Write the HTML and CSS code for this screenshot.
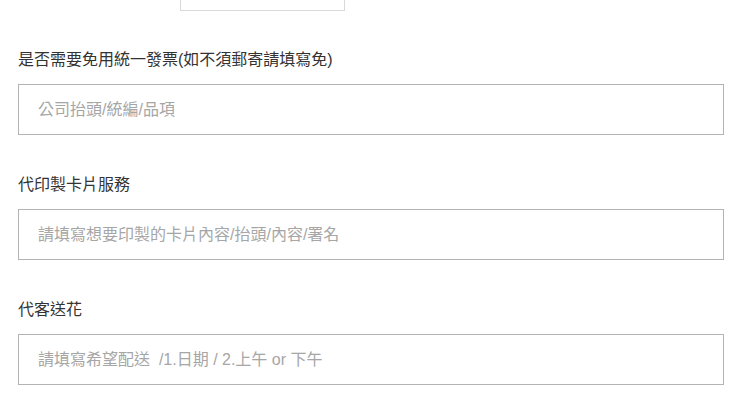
FILE: index.html
```html
<!DOCTYPE html>
<html lang="zh-Hant">
<head>
<meta charset="utf-8">
<link rel="stylesheet" href="styles.css">
</head>
<body>
<div class="form">
  <div class="prev-field"></div>
  <div class="field">
    <label class="label">是否需要免用統一發票(如不須郵寄請填寫免)</label>
    <input class="input" type="text" placeholder="公司抬頭/統編/品項">
  </div>
  <div class="field">
    <label class="label">代印製卡片服務</label>
    <input class="input" type="text" placeholder="請填寫想要印製的卡片內容/抬頭/內容/署名">
  </div>
  <div class="field">
    <label class="label">代客送花</label>
    <input class="input" type="text" placeholder="請填寫希望配送  /1.日期 / 2.上午 or 下午">
  </div>
</div>
</body>
</html>
```

FILE: styles.css
```css
html, body {
  margin: 0;
  padding: 0;
  background: #fff;
}
body {
  font-family: "Liberation Sans", "Noto Sans CJK TC", sans-serif;
  color: #333;
  overflow: hidden;
}
.form {
  padding: 0 15px 0 18px;
}
.prev-field {
  margin-top: -30px;
  margin-left: 162px;
  width: 163px;
  height: 39px;
  border: 1px solid #d9d9d9;
}
.field {
  display: flex;
  flex-direction: column;
  margin-top: 37px;
}
.field + .field {
  margin-top: 38px;
}
.label {
  font-size: 16px;
  line-height: 24px;
  color: #333;
}
.input {
  margin-top: 12px;
  box-sizing: border-box;
  height: 51px;
  width: 100%;
  border: 1px solid #b3b3b3;
  border-radius: 0;
  padding: 0 19px;
  font-family: "Liberation Sans", "Noto Sans CJK TC", sans-serif;
  font-size: 16px;
  color: #333;
  background: #fff;
  outline: none;
}
.input::placeholder {
  color: #a6a6a6;
  opacity: 1;
}
```
